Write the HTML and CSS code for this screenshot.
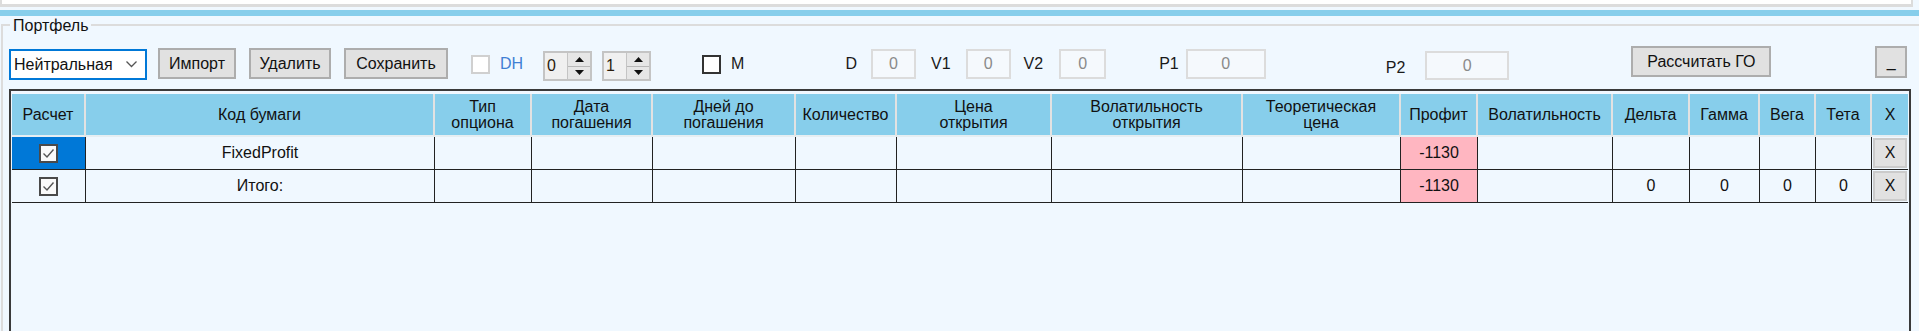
FILE: index.html
```html
<!DOCTYPE html>
<html lang="ru">
<head>
    <meta charset="UTF-8">
    <title>Портфель</title>
    <link rel="stylesheet" href="styles.css">
</head>
<body>
    <div class="topbar"></div>
    <div class="accent"></div>

    <section class="group">
        <div class="group-title">Портфель</div>

        <!-- Панель управления -->
        <div class="toolbar">
            <div class="select">
                <span>Нейтральная</span>
                <svg width="11" height="7" viewBox="0 0 11 7"><polyline points="0.5,0.5 5.5,5.5 10.5,0.5" fill="none" stroke="#555" stroke-width="1.3"/></svg>
            </div>
            <button class="btn btn-import">Импорт</button>
            <button class="btn btn-delete">Удалить</button>
            <button class="btn btn-save">Сохранить</button>

            <span class="check check-off check-dh"></span>
            <span class="lbl lbl-dh">DH</span>

            <div class="spin spin-a">
                <span class="spin-val">0</span>
                <span class="spin-btns">
                    <span class="spin-up"><svg width="9" height="5" viewBox="0 0 9 5"><polygon points="0,5 4.5,0 9,5" fill="#111"/></svg></span>
                    <span class="spin-down"><svg width="9" height="5" viewBox="0 0 9 5"><polygon points="0,0 4.5,5 9,0" fill="#111"/></svg></span>
                </span>
            </div>
            <div class="spin spin-b">
                <span class="spin-val">1</span>
                <span class="spin-btns">
                    <span class="spin-up"><svg width="9" height="5" viewBox="0 0 9 5"><polygon points="0,5 4.5,0 9,5" fill="#111"/></svg></span>
                    <span class="spin-down"><svg width="9" height="5" viewBox="0 0 9 5"><polygon points="0,0 4.5,5 9,0" fill="#111"/></svg></span>
                </span>
            </div>

            <span class="check check-m"></span>
            <span class="lbl lbl-m">M</span>

            <span class="lbl lbl-d">D</span>
            <span class="num num-d">0</span>
            <span class="lbl lbl-v1">V1</span>
            <span class="num num-v1">0</span>
            <span class="lbl lbl-v2">V2</span>
            <span class="num num-v2">0</span>
            <span class="lbl lbl-p1">P1</span>
            <span class="num num-p1">0</span>
            <span class="lbl lbl-p2">P2</span>
            <span class="num num-p2">0</span>

            <button class="btn btn-calc">Рассчитать ГО</button>
            <button class="btn btn-min">_</button>
        </div>

        <!-- Таблица позиций -->
        <div class="grid-wrap">
            <table class="grid">
                <colgroup>
                    <col class="c-calc">
                    <col class="c-code">
                    <col class="c-type">
                    <col class="c-date">
                    <col class="c-days">
                    <col class="c-qty">
                    <col class="c-price">
                    <col class="c-vol-open">
                    <col class="c-theor">
                    <col class="c-profit">
                    <col class="c-vol">
                    <col class="c-delta">
                    <col class="c-gamma">
                    <col class="c-vega">
                    <col class="c-theta">
                    <col class="c-del">
                </colgroup>
                <thead>
                    <tr>
                        <th>Расчет</th>
                        <th>Код бумаги</th>
                        <th>Тип<br>опциона</th>
                        <th>Дата<br>погашения</th>
                        <th>Дней до<br>погашения</th>
                        <th>Количество</th>
                        <th>Цена<br>открытия</th>
                        <th>Волатильность<br>открытия</th>
                        <th>Теоретическая<br>цена</th>
                        <th>Профит</th>
                        <th>Волатильность</th>
                        <th>Дельта</th>
                        <th>Гамма</th>
                        <th>Вега</th>
                        <th>Тета</th>
                        <th>X</th>
                    </tr>
                </thead>
                <tbody>
                    <tr>
                        <td class="sel"><span class="cb"><svg width="15" height="15" viewBox="0 0 15 15"><polyline points="2.5,7.5 6,11 12.5,3.5" fill="none" stroke="#555" stroke-width="1.4"/></svg></span></td>
                        <td>FixedProfit</td>
                        <td></td><td></td><td></td><td></td><td></td><td></td><td></td>
                        <td class="neg">-1130</td>
                        <td></td><td></td><td></td><td></td><td></td>
                        <td class="del"><span class="xbtn">X</span></td>
                    </tr>
                    <tr>
                        <td><span class="cb"><svg width="15" height="15" viewBox="0 0 15 15"><polyline points="2.5,7.5 6,11 12.5,3.5" fill="none" stroke="#555" stroke-width="1.4"/></svg></span></td>
                        <td>Итого:</td>
                        <td></td><td></td><td></td><td></td><td></td><td></td><td></td>
                        <td class="neg">-1130</td>
                        <td></td>
                        <td>0</td><td>0</td><td>0</td><td>0</td>
                        <td class="del"><span class="xbtn">X</span></td>
                    </tr>
                </tbody>
            </table>
        </div>
    </section>
</body>
</html>
```

FILE: styles.css
```css
* {
    margin: 0;
    padding: 0;
    box-sizing: border-box;
}

body {
    width: 1919px;
    height: 331px;
    overflow: hidden;
    background: #f0f8ff;
    font-family: "Liberation Sans", Arial, sans-serif;
    font-size: 16px;
    color: #111;
}

.topbar {
    width: 1913px;
    height: 7px;
    background: #fff;
    border: 2px solid #dcdcdc;
    border-top: none;
    border-bottom-width: 3px;
}

.accent {
    height: 6px;
    margin-top: 3px;
    background: #87ceeb;
}

/* рамка группы */
.group {
    margin: 8px 0 0 1px;
    padding-left: 6px;
    height: 400px;
    border: 2px solid #dcdcdc;
    border-right: none;
}

.group-title {
    display: table;
    margin: -10px 0 0 1px;
    padding: 0 3px;
    line-height: 19px;
    background: #f0f8ff;
}

/* панель */
.toolbar {
    display: flex;
    align-items: flex-start;
    height: 35px;
    margin-top: 11px;
}

.select {
    width: 138px;
    height: 31px;
    margin-top: 3px;
    padding: 0 8px 0 3px;
    display: flex;
    align-items: center;
    justify-content: space-between;
    background: #fff;
    border: 2px solid #0078d7;
}

.btn {
    height: 31px;
    margin-top: 2px;
    background: #e1e1e1;
    border: 2px solid #adadad;
    font: inherit;
    color: #111;
}

.btn-import { width: 78px; margin-left: 11px; }
.btn-delete { width: 82px; margin-left: 13px; }
.btn-save { width: 104px; margin-left: 13px; }
.btn-calc { width: 140px; margin-top: 0; margin-left: 122px; }
.btn-min { width: 32px; height: 32px; margin-top: 0; margin-left: 104px; }

.check {
    width: 19px;
    height: 19px;
    margin-top: 9px;
    background: #fff;
    border: 2px solid #333;
}

.check-off { border-color: #d0d0d0; }
.check-dh { margin-left: 23px; }
.check-m { margin-left: 51px; }

.lbl {
    height: 35px;
    display: flex;
    align-items: center;
    color: #1a1a1a;
}

.lbl-dh { margin-left: 10px; color: #3f80d4; }
.lbl-m { margin-left: 10px; }
.lbl-d { margin-left: 101px; }
.lbl-v1 { margin-left: 15px; }
.lbl-v2 { margin-left: 13px; }
.lbl-p1 { margin-left: 53px; }
.lbl-p2 { margin-left: 120px; padding-top: 8px; }

.spin {
    width: 49px;
    height: 30px;
    margin-top: 5px;
    display: flex;
    background: #f0f0f0;
    border: 2px solid #c4c4c4;
}

.spin-a { margin-left: 20px; }
.spin-b { margin-left: 10px; }

.spin-val {
    flex: 1;
    padding-left: 2px;
    line-height: 26px;
    color: #2a1c0c;
}

.spin-btns {
    width: 23px;
    display: flex;
    flex-direction: column;
    border-left: 1px solid #c4c4c4;
}

.spin-up,
.spin-down {
    flex: 1;
    display: flex;
    align-items: center;
    justify-content: center;
    background: #e6e6e6;
}

.spin-up { border-bottom: 1px solid #b8b8b8; }

.num {
    height: 30px;
    margin-top: 3px;
    line-height: 26px;
    text-align: center;
    color: #8a8a8a;
    background: #f5f9fd;
    border: 2px solid #dcdcdc;
}

.num-d { width: 45px; margin-left: 14px; }
.num-v1 { width: 45px; margin-left: 15px; }
.num-v2 { width: 47px; margin-left: 16px; }
.num-p1 { width: 80px; margin-left: 7px; }
.num-p2 { width: 84px; margin-left: 20px; margin-top: 5px; height: 29px; }

/* таблица */
.grid-wrap {
    width: 1902px;
    height: 260px;
    margin-top: 8px;
    padding: 3px 1px 0 1px;
    border: 2px solid #3a3a3a;
    background: #f0f8ff;
}

.grid {
    width: 1896px;
    table-layout: fixed;
    border-collapse: separate;
    border-spacing: 0;
}

.c-calc { width: 74px; }
.c-code { width: 349px; }
.c-type { width: 97px; }
.c-date { width: 121px; }
.c-days { width: 143px; }
.c-qty { width: 101px; }
.c-price { width: 155px; }
.c-vol-open { width: 191px; }
.c-theor { width: 158px; }
.c-profit { width: 77px; }
.c-vol { width: 135px; }
.c-delta { width: 77px; }
.c-gamma { width: 70px; }
.c-vega { width: 56px; }
.c-theta { width: 56px; }
.c-del { width: 36px; }

.grid th {
    height: 43px;
    padding: 0 2px;
    background: #87ceeb;
    font-weight: normal;
    line-height: 16px;
    border-right: 2px solid #e2e2e2;
    border-bottom: 2px solid #e6eef2;
}

.grid th:last-child { border-right: none; }

.grid td {
    height: 33px;
    padding: 0 2px;
    text-align: center;
    white-space: nowrap;
    border-right: 1px solid #222;
    border-bottom: 1px solid #222;
}

.grid td:last-child { border-right: none; }

.grid td.sel { background: #0078d7; }
.grid td.neg { background: #ffb6c1; }
.grid td.del { padding: 1px; }

.cb {
    display: inline-flex;
    align-items: center;
    justify-content: center;
    width: 19px;
    height: 19px;
    vertical-align: middle;
    background: #fafafa;
    border: 2px solid #4a4a4a;
}

.xbtn {
    display: flex;
    align-items: center;
    justify-content: center;
    height: 30px;
    background: #e1e1e1;
    border: 2px solid #cbcbcb;
}
```
